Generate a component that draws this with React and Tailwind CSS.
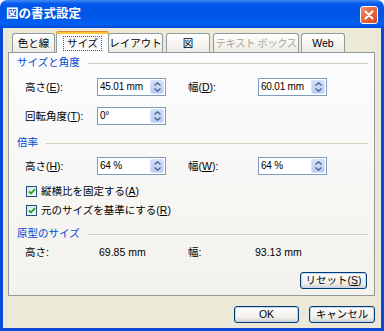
import React from 'react';

const font = { fontFamily: '"Liberation Sans", "Noto Sans CJK JP", sans-serif' };

const Spin = () => (
    <div className="w-[14px] h-[14px] rounded-[2px] border border-[#d5e0fb] bg-[linear-gradient(180deg,#d2defc,#b9cbf7)] flex flex-col items-center justify-center gap-[2px]">
        <svg width="7" height="4" viewBox="0 0 7 4"><path d="M0.5 3.5 L3.5 0.8 L6.5 3.5" fill="none" stroke="#4d6185" strokeWidth="1.3" /></svg>
        <svg width="7" height="4" viewBox="0 0 7 4"><path d="M0.5 0.5 L3.5 3.2 L6.5 0.5" fill="none" stroke="#4d6185" strokeWidth="1.3" /></svg>
    </div>
);

const Field = ({ value }) => (
    <div className="w-[69px] h-[18px] border border-[#7f9db9] bg-white flex items-center justify-between pl-[2px] pr-[1px]">
        <span className="text-[10px] leading-none text-black whitespace-pre tracking-[-0.2px]">{value}</span>
        <Spin />
    </div>
);

const Label = ({ children, w }) => (
    <div className={`${w} text-[10.5px] leading-none text-black`}>{children}</div>
);

const Header = ({ title }) => (
    <div className="h-[14px] flex items-center pl-[8px] pr-[6px]">
        <span className="text-[10.5px] leading-none text-[#0046d5]">{title}</span>
        <div className="flex-1 h-px bg-[#d0d0bf] ml-[8px] mt-[2px]"></div>
    </div>
);

const Check = ({ children }) => (
    <div className="flex items-center pl-[17px] gap-[4px]">
        <div className="w-[11px] h-[11px] border border-[#1c5180] bg-[linear-gradient(135deg,#dcdcd7,#ffffff)] flex items-center justify-center">
            <svg width="8" height="7" viewBox="0 0 8 7"><path d="M1 3.5 L3 5.5 L7 1.2" fill="none" stroke="#21a121" strokeWidth="1.8" /></svg>
        </div>
        <span className="text-[10.5px] leading-none text-black">{children}</span>
    </div>
);

const XpButton = ({ children, w }) => (
    <div className={`${w} h-[17px] rounded-[3px] border border-[#003c74] bg-[linear-gradient(180deg,#ffffff,#f0efea_70%,#d6d0c5)] shadow-[inset_0_0_0_1px_#c4d6f6] flex items-center justify-center text-[10.5px] leading-none text-black`}>
        {children}
    </div>
);

const Tab = ({ children, w, ml, disabled }) => (
    <div className={`${w} ${ml} h-[19px] rounded-t-[3px] border border-b-0 border-[#919b9c] bg-[linear-gradient(180deg,#ffffff,#ecebe6)] flex items-center justify-center whitespace-nowrap text-[10.5px] leading-none ${disabled ? 'text-[#aca899] tracking-[-0.6px]' : 'text-black'}`}>
        {children}
    </div>
);

export default function App() {
    return (
        <div className="w-[384px] h-[331px] flex flex-col bg-white overflow-hidden" style={font}>
            {/* Title bar */}
            <div className="h-[28px] rounded-t-[7px] bg-[linear-gradient(180deg,#3f8cf3_0%,#0058ee_14%,#0054e3_50%,#0060f3_86%,#004ad6_100%)] flex items-center justify-between pl-[6px] pr-[6px]">
                <span className="text-[12.5px] font-bold text-white leading-none">図の書式設定</span>
                <div className="w-[18px] h-[18px] mt-[1px] rounded-[3px] border border-white bg-[linear-gradient(135deg,#f08a6a,#d8451c)] flex items-center justify-center">
                    <svg width="10" height="10" viewBox="0 0 10 10"><path d="M1.5 1.5 L8.5 8.5 M8.5 1.5 L1.5 8.5" stroke="#ffffff" strokeWidth="2" strokeLinecap="round" /></svg>
                </div>
            </div>

            {/* Body */}
            <div className="flex-1 bg-[#ece9d8] border-x-[3px] border-b-[3px] border-[#0a4ad8] pl-[5px] pr-[6px] flex flex-col">
                {/* Tabs */}
                <div className="h-[24px] flex items-end pl-[4px]">
                    <Tab w="w-[43px]" ml="ml-0">色と線</Tab>
                    <div className="w-[53px] ml-[1px] h-[22px] -mb-px relative z-10 rounded-t-[3px] border-x border-[#919b9c] bg-[#fcfcfe] flex flex-col">
                        <div className="h-[3px] rounded-t-[3px] bg-[#ffc83c] border-t border-[#e68b2c] -mx-px"></div>
                        <div className="flex-1 flex items-center justify-center">
                            <span className="text-[10.5px] leading-none text-black outline-dotted outline-1 outline-[#555] px-[3px] py-[1px]">サイズ</span>
                        </div>
                    </div>
                    <Tab w="w-[55px]" ml="-ml-px">レイアウト</Tab>
                    <Tab w="w-[44px]" ml="ml-[3px]">図</Tab>
                    <Tab w="w-[86px]" ml="ml-[3px]" disabled>テキスト ボックス</Tab>
                    <Tab w="w-[44px]" ml="ml-[2px]">Web</Tab>
                </div>

                {/* Panel */}
                <div className="h-[244px] border border-[#919b9c] bg-[linear-gradient(180deg,#fcfcfe,#f3f2ec)] flex flex-col">
                    <div className="mt-[2px]"><Header title="サイズと角度" /></div>

                    <div className="mt-[9px] h-[18px] flex items-center pl-[16px]">
                        <Label w="w-[72px]">高さ(<u>E</u>):</Label>
                        <Field value="45.01 mm" />
                        <div className="ml-[22px]"><Label w="w-[70px]">幅(<u>D</u>):</Label></div>
                        <Field value="60.01 mm" />
                    </div>

                    <div className="mt-[11px] h-[18px] flex items-center pl-[16px]">
                        <Label w="w-[72px]">回転角度(<u>T</u>):</Label>
                        <Field value="0°" />
                    </div>

                    <div className="mt-[10px]"><Header title="倍率" /></div>

                    <div className="mt-[8px] h-[18px] flex items-center pl-[16px]">
                        <Label w="w-[72px]">高さ(<u>H</u>):</Label>
                        <Field value="64 %" />
                        <div className="ml-[22px]"><Label w="w-[70px]">幅(<u>W</u>):</Label></div>
                        <Field value="64 %" />
                    </div>

                    <div className="mt-[10px] h-[12px] flex items-center">
                        <Check>縦横比を固定する(<u>A</u>)</Check>
                    </div>
                    <div className="mt-[7px] h-[12px] flex items-center">
                        <Check>元のサイズを基準にする(<u>R</u>)</Check>
                    </div>

                    <div className="mt-[10px]"><Header title="原型のサイズ" /></div>

                    <div className="mt-[5px] h-[14px] flex items-center pl-[16px] text-[10.5px] leading-none text-black">
                        <span className="w-[74px]">高さ:</span>
                        <span className="w-[89px]">69.85 mm</span>
                        <span className="w-[67px]">幅:</span>
                        <span>93.13 mm</span>
                    </div>

                    <div className="mt-[13px] flex justify-end pr-[7px]">
                        <XpButton w="w-[67px]">リセット(<u>S</u>)</XpButton>
                    </div>
                </div>

                {/* Buttons */}
                <div className="mt-[10px] flex justify-end gap-[10px]">
                    <XpButton w="w-[65px]">OK</XpButton>
                    <XpButton w="w-[66px]">キャンセル</XpButton>
                </div>
            </div>
        </div>
    );
}
